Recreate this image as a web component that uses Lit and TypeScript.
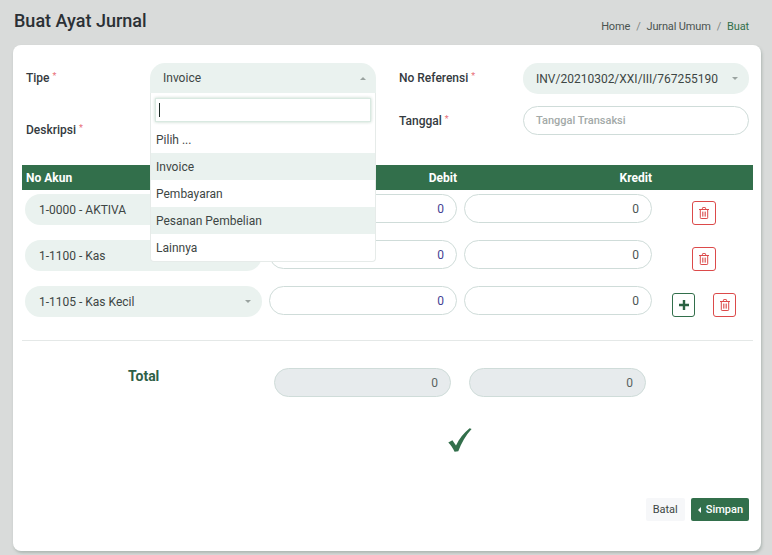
import { LitElement, html, css, svg } from 'lit';
import { customElement } from 'lit/decorators.js';

const trashIcon = svg`<svg width="10" height="12" viewBox="0 0 10 12" fill="none" stroke="#dc4a4a" stroke-width="1">
  <path d="M0 2.5h10M3.4 2.5V1.2q0-.7.7-.7h1.8q.7 0 .7.7v1.3"/>
  <path d="M1.3 2.5v8.2q0 .8.8.8h5.8q.8 0 .8-.8V2.5"/>
  <path d="M3.5 4.6v5M5 4.6v5M6.5 4.6v5" stroke="#e27878"/>
</svg>`;

const plusIcon = svg`<svg width="10" height="10" viewBox="0 0 10 10" fill="none" stroke="#2a6242" stroke-width="2.4">
  <path d="M5 0v10M0 5h10"/>
</svg>`;

const checkIcon = svg`<svg width="24" height="24" viewBox="0 0 24 24" fill="#326f4b">
  <path d="M0.3 14.6 4.4 12.2 8 17.4C11.2 10.8 15.8 4.8 21.6 0.2L23.6 1C17.6 7.6 13.4 15 10.3 23.2L6.6 23.8C5 20.4 2.8 17.2 0.3 14.6Z"/>
</svg>`;

const rows = [
  { akun: '1-0000 - AKTIVA', canAdd: false },
  { akun: '1-1100 - Kas', canAdd: false },
  { akun: '1-1105 - Kas Kecil', canAdd: true },
];

const options = ['Pilih ...', 'Invoice', 'Pembayaran', 'Pesanan Pembelian', 'Lainnya'];

@customElement('app-root')
export class AppRoot extends LitElement {
  static styles = css`
    :host {
      display: block;
      width: 772px;
      height: 555px;
      overflow: hidden;
      background: #d9dbda;
      color: #343a40;
      font-family: Roboto, 'Liberation Sans', sans-serif;
      font-size: 12px;
    }

    * {
      box-sizing: border-box;
    }

    .top {
      display: flex;
      justify-content: space-between;
      height: 45px;
      padding: 0 23px 0 14px;
    }

    h1 {
      margin: 9px 0 0;
      font-size: 18px;
      line-height: 24px;
      font-weight: 500;
      color: #2b3035;
    }

    .crumbs {
      display: flex;
      gap: 6px;
      margin-top: 20px;
      font-size: 11px;
      line-height: 14px;
      letter-spacing: -0.15px;
      color: #4a5350;
    }

    .crumbs .sep {
      color: #7d8583;
    }

    .crumbs .now {
      color: #326f4b;
    }

    .card {
      position: relative;
      width: 748px;
      height: 506px;
      margin-left: 13px;
      padding-top: 18px;
      background: #fff;
      border-radius: 8px;
      box-shadow: 1px 2px 3px rgba(120, 140, 130, 0.45);
    }

    .form {
      display: grid;
      grid-template-columns: 124px 226px 147px 226px;
      padding-left: 13px;
    }

    .form .gap {
      padding-left: 23px;
    }

    label {
      font-weight: 500;
      line-height: 31px;
      color: #343a40;
    }

    label i {
      position: relative;
      top: -3px;
      margin-left: 3px;
      font-style: normal;
      font-weight: 400;
      font-size: 9px;
      color: #e8707a;
    }

    .row-a {
      height: 43px;
    }

    .row-b {
      height: 59px;
    }

    .label-low {
      padding-top: 9px;
    }

    .ctl-wrap {
      position: relative;
    }

    .select {
      display: flex;
      align-items: center;
      justify-content: space-between;
      height: 31px;
      padding: 0 11px 0 13px;
      background: #eaf2ef;
      border-radius: 15px;
      color: #3d4644;
    }

    .select.open {
      height: 30px;
      padding-right: 10px;
      border-radius: 15px 15px 0 0;
    }

    .caret {
      width: 0;
      height: 0;
      border-left: 3px solid transparent;
      border-right: 3px solid transparent;
      border-top: 3px solid #9aa3a0;
    }

    .caret.up {
      border-top: 0;
      border-bottom: 3px solid #9aa3a0;
    }

    .input {
      display: flex;
      align-items: center;
      height: 29px;
      padding: 0 12px;
      background: #fff;
      border: 1px solid #cfdcd9;
      border-radius: 15px;
    }

    .input.placeholder {
      font-size: 11px;
      font-weight: 500;
      color: #a3aaa8;
    }

    .input.num {
      justify-content: flex-end;
    }

    .input.debit {
      color: #453f94;
    }

    .input.kredit {
      color: #4d5654;
    }

    .dropdown {
      position: absolute;
      z-index: 5;
      top: 30px;
      left: 0;
      width: 226px;
      height: 169px;
      background: #fff;
      border: 1px solid #e6ebe9;
      border-top: 0;
      border-radius: 0 0 4px 4px;
    }

    .search {
      display: flex;
      align-items: center;
      height: 24px;
      margin: 5px 4px 4px;
      padding-left: 3px;
      border: 1px solid #d9e9e1;
      box-shadow: 0 0 3px rgba(50, 111, 75, 0.3);
    }

    .search span {
      width: 1px;
      height: 14px;
      background: #1d2b26;
    }

    .option {
      display: flex;
      align-items: center;
      height: 27px;
      padding-left: 5px;
      color: #3d4644;
    }

    .option.on {
      background: #eaf2ef;
    }

    .head {
      display: grid;
      grid-template-columns: 236px 188px 188px;
      column-gap: 7px;
      align-items: center;
      width: 731px;
      height: 25px;
      margin-left: 9px;
      padding-left: 4px;
      background: #326f4b;
      color: #fff;
      font-weight: 700;
    }

    .head .r {
      text-align: right;
    }

    .lines {
      display: flex;
      flex-direction: column;
      gap: 15px;
      margin: 4px 0 0 12px;
    }

    .line {
      display: grid;
      grid-template-columns: 237px 188px 188px 1fr;
      column-gap: 7px;
      align-items: start;
    }

    .line .select {
      padding-left: 14px;
      border-radius: 16px;
    }

    .actions {
      display: flex;
      gap: 18px;
      padding: 7px 0 0 33px;
    }

    .actions.with-add {
      padding-left: 13px;
    }

    .btn {
      display: flex;
      align-items: center;
      justify-content: center;
      width: 24px;
      height: 24px;
      background: #fff;
      border: 1px solid #dc4a4a;
      border-radius: 3px;
    }

    .btn.add {
      width: 23px;
      border-color: #326f4b;
    }

    .btn.del-small {
      width: 23px;
    }

    hr {
      width: 731px;
      height: 1px;
      margin: 23px 0 0 9px;
      border: 0;
      background: #e4e8e7;
    }

    .total {
      display: flex;
      margin: 27px 0 0;
    }

    .total b {
      width: 261px;
      padding: 0 0 0 115px;
      font-size: 14px;
      line-height: 16px;
      font-weight: 700;
      color: #2f5f47;
    }

    .total .input {
      width: 177px;
      background: #e7ebed;
      color: #5a6361;
    }

    .total .input + .input {
      margin-left: 18px;
    }

    .ok {
      display: flex;
      justify-content: center;
      width: 894px;
      margin-top: 31px;
    }

    .buttons {
      display: flex;
      justify-content: flex-end;
      gap: 6px;
      margin: 46px 12px 0 0;
    }

    .buttons div {
      display: flex;
      align-items: center;
      height: 23px;
      border-radius: 2px;
      font-size: 11px;
    }

    .batal {
      padding: 0 7px;
      background: #f6f7f9;
      color: #3d4644;
    }

    .simpan {
      gap: 5px;
      padding: 0 6px 0 7px;
      background: #326f4b;
      color: #fff;
      font-weight: 500;
    }

    .simpan span {
      width: 0;
      height: 0;
      border-top: 3.5px solid transparent;
      border-bottom: 3.5px solid transparent;
      border-right: 3px solid #fff;
    }
  `;

  render() {
    return html`
      <div class="top">
        <h1>Buat Ayat Jurnal</h1>
        <div class="crumbs">
          <span>Home</span><span class="sep">/</span>
          <span>Jurnal Umum</span><span class="sep">/</span>
          <span class="now">Buat</span>
        </div>
      </div>
      <div class="card">
        <div class="form">
          <label class="row-a">Tipe<i>*</i></label>
          <div class="ctl-wrap row-a">
            <div class="select open">Invoice<span class="caret up"></span></div>
            <div class="dropdown">
              <div class="search"><span></span></div>
              ${options.map(
                (o) => html`<div class="option ${o === 'Invoice' || o.startsWith('Pesanan') ? 'on' : ''}">${o}</div>`
              )}
            </div>
          </div>
          <label class="row-a gap">No Referensi<i>*</i></label>
          <div class="row-a">
            <div class="select">INV/20210302/XXI/III/767255190<span class="caret"></span></div>
          </div>
          <label class="row-b label-low">Deskripsi<i>*</i></label>
          <div class="row-b"></div>
          <label class="row-b gap">Tanggal<i>*</i></label>
          <div class="row-b"><div class="input placeholder">Tanggal Transaksi</div></div>
        </div>
        <div class="head">
          <span>No Akun</span>
          <span class="r">Debit</span>
          <span class="r">Kredit</span>
        </div>
        <div class="lines">
          ${rows.map(
            (r) => html`
              <div class="line">
                <div class="select">${r.akun}<span class="caret"></span></div>
                <div class="input num debit">0</div>
                <div class="input num kredit">0</div>
                <div class="actions ${r.canAdd ? 'with-add' : ''}">
                  ${r.canAdd ? html`<div class="btn add">${plusIcon}</div>` : ''}
                  <div class="btn ${r.canAdd ? 'del-small' : ''}">${trashIcon}</div>
                </div>
              </div>
            `
          )}
        </div>
        <hr />
        <div class="total">
          <b>Total</b>
          <div class="input num">0</div>
          <div class="input num">0</div>
        </div>
        <div class="ok">${checkIcon}</div>
        <div class="buttons">
          <div class="batal">Batal</div>
          <div class="simpan"><span></span>Simpan</div>
        </div>
      </div>
    `;
  }
}
